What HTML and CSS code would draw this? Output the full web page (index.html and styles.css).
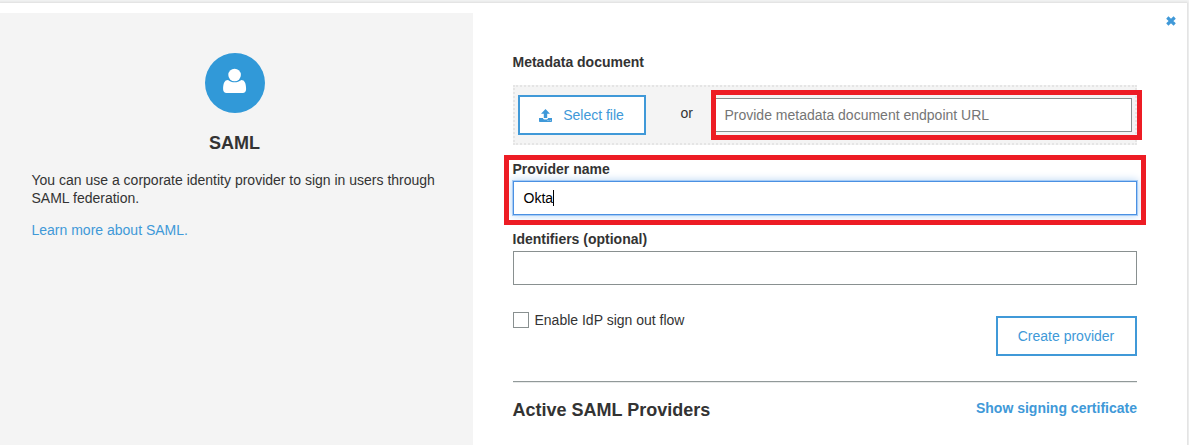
FILE: index.html
```html
<!DOCTYPE html>
<html lang="en">
<head>
<meta charset="utf-8">
<title>SAML identity provider</title>
<link rel="stylesheet" href="styles.css">
</head>
<body>
<div class="panel">
  <aside class="intro">
    <svg class="avatar" viewBox="0 0 60 60" width="60" height="60" aria-hidden="true">
      <circle cx="30" cy="30" r="30" fill="#3199d8"/>
      <path fill="#fff" d="M23 26.900C25 28.600 27.300 29.300 29.600 29.300S34.300 28.600 36.300 26.900C39.700 26.900 41.100 30.300 41.100 36.300C41.100 38.700 39.700 40 37.800 40H21.500C19.500 40 18.100 38.700 18.100 36.300C18.100 30.300 19.500 26.900 23 26.900Z"/>
      <circle cx="29.600" cy="22" r="6.900" fill="#3199d8"/>
      <circle cx="29.600" cy="22" r="6.300" fill="#fff"/>
    </svg>
    <h2 class="intro-title">SAML</h2>
    <p class="intro-text">You can use a corporate identity provider to sign in users through SAML federation.</p>
    <a class="link">Learn more about SAML.</a>
  </aside>
  <main class="form">
    <svg class="close" viewBox="0 0 10 10" width="10" height="10" aria-label="Close"><path d="M1.300 1.500 8.700 8.500M8.700 1.500 1.300 8.500" stroke="#4099d8" stroke-width="3.200"/></svg>
    <div class="label">Metadata document</div>
    <div class="source">
      <button class="button select"><svg viewBox="0 0 13 13" width="13" height="13" aria-hidden="true"><path fill="#3f99d9" d="M6.500 0 11 4.700H8.200V9H4.800V4.700H2ZM0 9H3.900C4.100 10 5 10.500 6.500 10.500S8.900 10 9.100 9H13V12.200Q13 13 12.200 13H.8Q0 13 0 12.200Z"/><path stroke="#fff" stroke-width=".6" d="M8.500 11.500H9.500M10.700 11.500H11.700"/></svg>Select file</button>
      <span class="or">or</span>
      <input class="field url" type="text" placeholder="Provide metadata document endpoint URL">
      <div class="mark mark-url"></div>
    </div>
    <div class="group">
      <label class="label">Provider name</label>
      <div class="field focused">Okta<span class="caret"></span></div>
      <div class="mark mark-name"></div>
    </div>
    <label class="label identifiers">Identifiers (optional)</label>
    <input class="field" type="text">
    <div class="actions">
      <label class="check"><span class="box"></span>Enable IdP sign out flow</label>
      <button class="button create">Create provider</button>
    </div>
    <div class="providers">
      <h3 class="providers-title">Active SAML Providers</h3>
      <a class="link certificate">Show signing certificate</a>
    </div>
  </main>
</div>
</body>
</html>
```
FILE: styles.css
```css
* { box-sizing: border-box; }
body {
  margin: 0;
  padding-top: 3px;
  height: 445px;
  overflow: hidden;
  background: #f2f3f3;
  color: #333;
  font: 14px/18px "Liberation Sans", Arial, sans-serif;
}
.panel {
  display: flex;
  width: 1187px;
  height: 442px;
  padding-top: 10px;
  background: #fff;
  box-shadow: 0 0 2px 1px #ddd;
}
.intro {
  width: 473px;
  padding: 40px 31.500px 0;
  background: #f4f4f4;
}
.avatar { display: block; margin: 0 auto; position: relative; left: -1.500px; }
.intro-title { margin: 18px 4px 16px 0; font-size: 18px; line-height: 24px; text-align: center; }
.intro-text { margin: 0 0 14px; }
.link { color: #4099d8; }
.form { position: relative; width: 714px; padding: 40px 50px 0 40px; }
.close { position: absolute; right: 11px; top: 3px; }
.label { display: block; height: 18px; font-weight: bold; text-indent: -.5px; }
.source {
  position: relative;
  display: flex;
  height: 60px;
  margin-top: 14px;
  padding: 8px 3px;
  border: 2px dotted #e5e5e5;
  background: #f4f4f4;
}
.button {
  height: 40px;
  padding: 0;
  border: 2px solid #4099d8;
  background: #fff;
  color: #4099d8;
  font: inherit;
}
.select { display: flex; width: 128px; align-items: center; justify-content: center; gap: 11px; padding-right: 1px; }
.or { margin: 9px 21px 0 34.500px; }
.field {
  display: block;
  width: 100%;
  height: 34px;
  padding: 0 10px;
  border: 1px solid #899090;
  background: #fff;
  color: #000;
  font: inherit;
}
.url { flex: 1; width: auto; margin-top: 3px; padding-left: 9.500px; }
.url::placeholder { color: #757575; opacity: 1; }
.group { position: relative; margin-top: 15px; }
.group .label { height: 21px; }
.focused {
  display: flex;
  align-items: center;
  padding-left: 9.500px;
  border-color: #4a90e2;
  box-shadow: 0 0 0 1px #a7ccf6, 0 0 8px 1px #bcd8f5;
}
.caret { width: 1px; height: 16px; background: #000; }
.identifiers { margin: 15px 0 3px; }
.actions { display: flex; justify-content: space-between; height: 71px; margin-top: 26px; }
.check { display: flex; height: 18px; gap: 5.500px; }
.box { width: 16px; height: 16px; margin-top: 1px; border: 1px solid #899090; }
.create { width: 141px; margin-top: 5px; padding-right: 1px; }
.providers {
  display: flex;
  justify-content: space-between;
  margin-top: -1px;
  padding-top: 16px;
  border-top: 1px solid #919999;
  box-shadow: inset 0 1px #e8eaea;
}
.providers-title { margin: 0; font-size: 18px; line-height: 24px; text-indent: -.5px; }
.certificate { margin-top: 1px; font-weight: bold; }
/* Highlight frames laid over the fields they call out */
.mark { position: absolute; border: 5px solid #ed1c24; pointer-events: none; }
.mark-url { left: 196px; top: 3px; width: 431px; height: 50px; }
.mark-name { left: -9px; top: -5px; width: 642px; height: 70px; }
```
